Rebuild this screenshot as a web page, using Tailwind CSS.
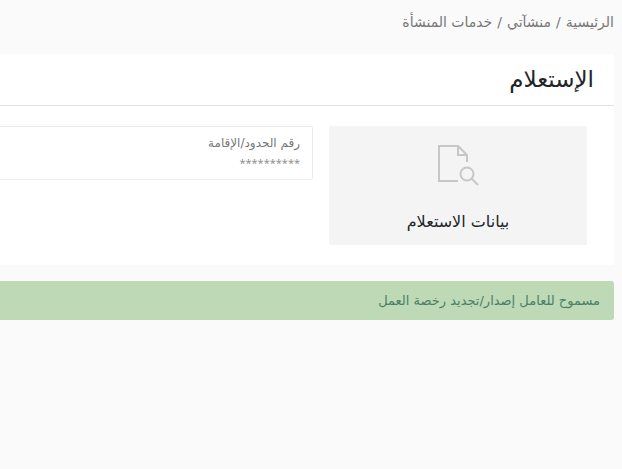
<!DOCTYPE html>
<html lang="ar" dir="rtl">
<head>
    <meta charset="UTF-8">
    <meta name="viewport" content="width=device-width, initial-scale=1.0">
    <title>الإستعلام</title>
    <script src="https://cdn.jsdelivr.net/npm/@tailwindcss/browser@4"></script>
</head>
<body class="min-h-screen bg-[#fafafa] font-['DejaVu_Sans',sans-serif] text-[#212529]">
    <div class="ps-2">
        <nav class="flex h-[54px] items-start pt-2 text-sm leading-7 text-[#777777]" aria-label="breadcrumb">
            <ol class="flex gap-[5px]">
                <li><a href="#">الرئيسية</a></li>
                <li aria-hidden="true">/</li>
                <li><a href="#">منشآتي</a></li>
                <li aria-hidden="true">/</li>
                <li><a href="#">خدمات المنشأة</a></li>
            </ol>
        </nav>

        <main>
            <section class="bg-white">
                <h1 class="flex h-[52px] items-center border-b border-[#e3e3e3] px-5 text-[23px]">الإستعلام</h1>
                <div class="flex items-start gap-4 pt-5 pb-5 ps-[27px]">
                    <!-- Inquiry card -->
                    <div class="flex h-[119px] w-[258px] shrink-0 flex-col items-center gap-4 rounded-xs bg-[#f4f4f4] pt-4">
                        <svg class="size-12" viewBox="0 0 48 48" fill="none" stroke="#c5c7c9" stroke-width="2" aria-hidden="true">
                            <path d="M24 39H5V4h19l9 9v7"/>
                            <path d="M24 4v9h9"/>
                            <circle cx="33" cy="32" r="6.5"/>
                            <path d="M37 36l7 7"/>
                        </svg>
                        <h2 class="text-base leading-8">بيانات الاستعلام</h2>
                    </div>
                    <!-- Border / residence number -->
                    <dl class="h-[54px] grow rounded-s-xs border border-e-0 border-[#ebebeb] px-3 pt-1 text-[#777777]">
                        <dt class="text-xs leading-6">رقم الحدود/الإقامة</dt>
                        <dd class="font-['Open_Sans',sans-serif] text-[11px] leading-4 text-[#888888]">**********</dd>
                    </dl>
                </div>
            </section>

            <div role="alert" class="mt-4 flex h-[39px] items-center rounded-s-[3px] bg-[#bdd9b5] px-[14px] text-[13px] text-[#4a7f68]">
                مسموح للعامل إصدار/تجديد رخصة العمل
            </div>
        </main>
    </div>
</body>
</html>
